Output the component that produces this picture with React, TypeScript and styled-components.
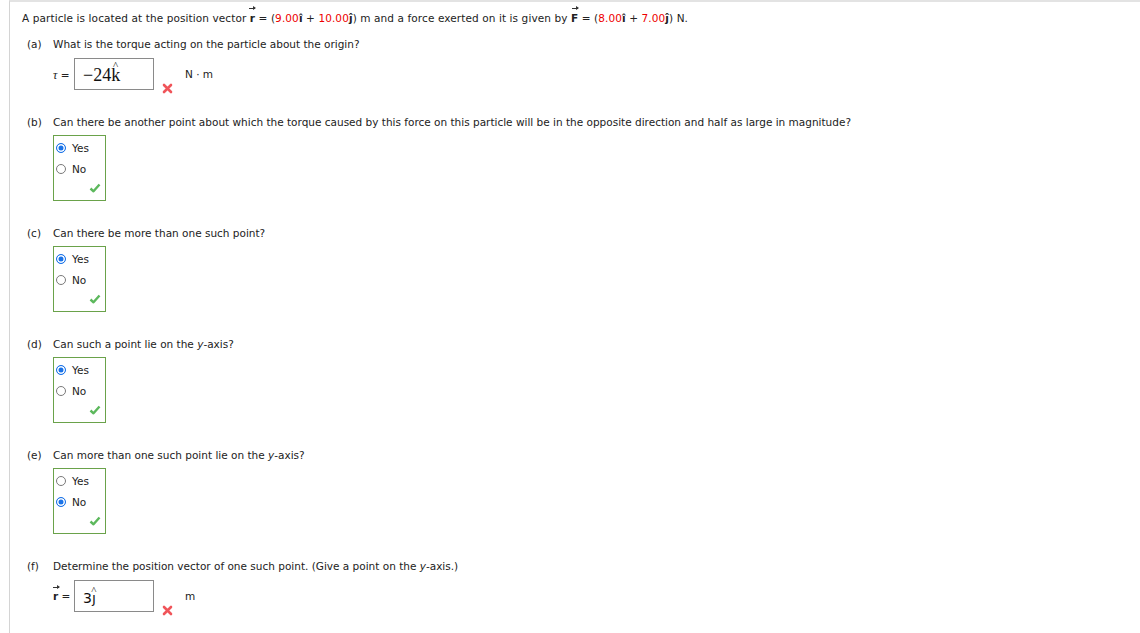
import React from "react";
import styled, { createGlobalStyle } from "styled-components";

const GlobalStyle = createGlobalStyle`
  html, body {
    margin: 0;
    padding: 0;
    background: #fff;
  }
  body {
    font-family: "DejaVu Sans", Verdana, sans-serif;
    font-size: 10.5px;
    color: #222;
  }
`;

type Choice = { label: string; checked: boolean };

type Part =
  | { key: string; text: React.ReactNode; kind: "choice"; options: Choice[] }
  | {
      key: string;
      text: React.ReactNode;
      kind: "input";
      symbol: React.ReactNode;
      value: React.ReactNode;
      unit: string;
    };

const YesNo = (yes: boolean): Choice[] => [
  { label: "Yes", checked: yes },
  { label: "No", checked: !yes },
];

// built lazily so the styled components below are defined first
const getParts = (): Part[] => [
  {
    key: "a",
    kind: "input",
    text: "What is the torque acting on the particle about the origin?",
    symbol: <Tau>τ</Tau>,
    value: (
      <>
        −24<Hat>k</Hat>
      </>
    ),
    unit: "N · m",
  },
  {
    key: "b",
    kind: "choice",
    text: "Can there be another point about which the torque caused by this force on this particle will be in the opposite direction and half as large in magnitude?",
    options: YesNo(true),
  },
  {
    key: "c",
    kind: "choice",
    text: "Can there be more than one such point?",
    options: YesNo(true),
  },
  {
    key: "d",
    kind: "choice",
    text: (
      <>
        Can such a point lie on the <i>y</i>-axis?
      </>
    ),
    options: YesNo(true),
  },
  {
    key: "e",
    kind: "choice",
    text: (
      <>
        Can more than one such point lie on the <i>y</i>-axis?
      </>
    ),
    options: YesNo(false),
  },
  {
    key: "f",
    kind: "input",
    text: (
      <>
        Determine the position vector of one such point. (Give a point on the <i>y</i>-axis.)
      </>
    ),
    symbol: <Vec $bold>r</Vec>,
    value: (
      <SansValue>
        3<Hat $sans>ȷ</Hat>
      </SansValue>
    ),
    unit: "m",
  },
];

function Cross() {
  return (
    <svg width="11" height="11" viewBox="0 0 11 11">
      <path d="M2 2 L9 9 M9 2 L2 9" stroke="#f0555a" strokeWidth="2.6" strokeLinecap="round" />
    </svg>
  );
}

function Check() {
  return (
    <svg width="12" height="10" viewBox="0 0 12 10">
      <path d="M1.5 5.5 L4.5 8.3 L10.5 1.5" fill="none" stroke="#5cb85c" strokeWidth="2.4" strokeLinejoin="round" />
    </svg>
  );
}

export default function App() {
  const parts = getParts();
  return (
    <>
      <GlobalStyle />
      <Page>
        <Intro>
          A particle is located at the position vector <Vec $bold>r</Vec> = (
          <Red>9.00</Red>
          <Unit>î</Unit> + <Red>10.00</Red>
          <Unit>ĵ</Unit>) m and a force exerted on it is given by <Vec $bold>F</Vec> = (
          <Red>8.00</Red>
          <Unit>î</Unit> + <Red>7.00</Red>
          <Unit>ĵ</Unit>) N.
        </Intro>
        {parts.map((p) => (
          <Section key={p.key}>
            <Question>
              <Letter>({p.key})</Letter>
              <span>{p.text}</span>
            </Question>
            {p.kind === "input" ? (
              <AnswerRow>
                <Symbol>{p.symbol} =</Symbol>
                <InputBox>{p.value}</InputBox>
                <Mark>
                  <Cross />
                </Mark>
                <UnitLabel>{p.unit}</UnitLabel>
              </AnswerRow>
            ) : (
              <ChoiceBox>
                {p.options.map((o) => (
                  <Option key={o.label}>
                    <Radio $checked={o.checked} />
                    {o.label}
                  </Option>
                ))}
                <CheckSlot>
                  <Check />
                </CheckSlot>
              </ChoiceBox>
            )}
          </Section>
        ))}
      </Page>
    </>
  );
}

const Page = styled.div`
  margin-left: 9px;
  height: 633px;
  box-sizing: border-box;
  border-top: 2px solid #e3e3e3;
  border-left: 1px solid #d4d4d4;
  padding: 9px 0 0 12px;
  overflow: hidden;
`;

const Intro = styled.div`
  line-height: 14px;
  white-space: nowrap;
  letter-spacing: 0.1px;
`;

const Red = styled.span`
  color: #ee0000;
`;

const Unit = styled.span`
  font-weight: bold;
`;

const Vec = styled.span<{ $bold?: boolean }>`
  position: relative;
  display: inline-block;
  font-weight: ${(p) => (p.$bold ? "bold" : "normal")};
  &::before {
    content: "";
    position: absolute;
    left: 50%;
    top: -3px;
    width: 6px;
    margin-left: -3px;
    height: 1px;
    background: #333;
  }
  &::after {
    content: "";
    position: absolute;
    left: 50%;
    top: -5px;
    margin-left: 1px;
    border-left: 3px solid #333;
    border-top: 2.5px solid transparent;
    border-bottom: 2.5px solid transparent;
  }
`;

const Section = styled.div`
  margin-top: 25px;
  margin-left: 5px;
  &:nth-child(2) {
    margin-top: 12px;
  }
`;

const Question = styled.div`
  display: flex;
  line-height: 14px;
  white-space: nowrap;
`;

const Letter = styled.span`
  width: 26px;
  flex: none;
`;

const AnswerRow = styled.div`
  display: flex;
  align-items: flex-start;
  margin: 7px 0 0 26px;
  height: 32px;
`;

const Symbol = styled.span`
  width: 21px;
  margin-top: 10px;
  white-space: nowrap;
`;

const Tau = styled.span`
  font-family: "Liberation Serif", serif;
  font-style: italic;
  font-size: 12px;
`;

const InputBox = styled.div`
  width: 80px;
  height: 32px;
  box-sizing: border-box;
  border: 1px solid #8a8a8a;
  padding: 6px 0 0 8px;
  font-family: "Liberation Serif", serif;
  font-size: 18px;
  line-height: 20px;
  color: #111;
`;

const SansValue = styled.span`
  font-family: "DejaVu Sans", sans-serif;
  font-size: 14px;
`;

const Hat = styled.span<{ $sans?: boolean }>`
  position: relative;
  display: inline-block;
  &::after {
    content: "^";
    position: absolute;
    left: 50%;
    top: ${(p) => (p.$sans ? "-8px" : "-10px")};
    transform: translateX(-50%);
    font-size: 11px;
    font-family: "Liberation Serif", serif;
  }
`;

const Mark = styled.span`
  margin: 25px 0 0 8px;
  width: 11px;
  height: 11px;
  display: flex;
`;

const UnitLabel = styled.span`
  margin: 10px 0 0 12px;
`;

const ChoiceBox = styled.div`
  margin: 6px 0 0 26px;
  width: 53px;
  height: 66px;
  box-sizing: border-box;
  border: 1px solid #6aa24a;
  padding: 6px 0 0 2px;
  display: flex;
  flex-direction: column;
  gap: 9px;
  position: relative;
`;

const Option = styled.label`
  display: flex;
  align-items: center;
  gap: 6px;
  line-height: 12px;
`;

const Radio = styled.span<{ $checked: boolean }>`
  width: 10px;
  height: 10px;
  box-sizing: border-box;
  border-radius: 50%;
  border: 1px solid ${(p) => (p.$checked ? "#1a73e8" : "#7a7a7a")};
  background: ${(p) => (p.$checked ? "#1a73e8" : "#fff")};
  box-shadow: ${(p) => (p.$checked ? "inset 0 0 0 1.5px #fff" : "none")};
  flex: none;
`;

const CheckSlot = styled.span`
  position: absolute;
  right: 4px;
  bottom: 7px;
  display: flex;
`;
